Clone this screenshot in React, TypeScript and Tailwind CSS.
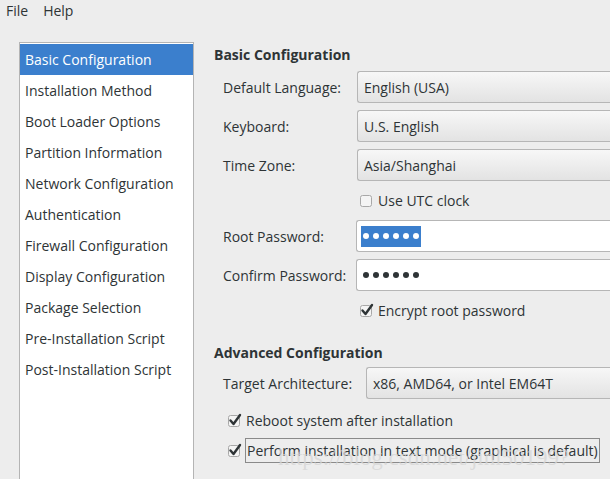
const font = { fontFamily: '"Open Sans", "DejaVu Sans", sans-serif' }

const pages = [
  "Basic Configuration",
  "Installation Method",
  "Boot Loader Options",
  "Partition Information",
  "Network Configuration",
  "Authentication",
  "Firewall Configuration",
  "Display Configuration",
  "Package Selection",
  "Pre-Installation Script",
  "Post-Installation Script",
]

function Check({ checked }: { checked: boolean }) {
  return (
    <svg width="16" height="16" viewBox="0 0 16 16" className="shrink-0">
      <rect x="1.5" y="3.5" width="11" height="11" rx="2" fill="#f4f4f4" stroke="#a8a8a8" />
      {checked && (
        <path d="M3.5 8.5 L6.5 12 L13 3" fill="none" stroke="#2e3436" strokeWidth="2.4" strokeLinecap="round" strokeLinejoin="round" />
      )}
    </svg>
  )
}

function Combo({ value }: { value: string }) {
  return (
    <div className="h-[32px] flex-1 flex items-center pl-[6px] rounded-l-[3px] border border-r-0 border-[#b6b6b6] bg-gradient-to-b from-[#f7f7f7] to-[#e3e3e3]">
      {value}
    </div>
  )
}

function Row({ label, children }: { label: string; children: React.ReactNode }) {
  return (
    <div className="flex items-center">
      <div className="w-[134px] shrink-0">{label}</div>
      {children}
    </div>
  )
}

function Dots() {
  return (
    <span className="flex gap-[4px]">
      {[0, 1, 2, 3, 4, 5].map(i => (
        <span key={i} className="w-[6px] h-[6px] rounded-full bg-current" />
      ))}
    </span>
  )
}

export default function App() {
  return (
    <div style={font} className="relative w-[610px] h-[479px] overflow-hidden bg-[#ededed] text-[14px] text-[#2e3436]">
      <div className="h-[22px] flex items-center gap-[15px] pl-[6px] -mt-[1px]">
        <span>File</span>
        <span>Help</span>
      </div>

      <div className="flex pl-[19px] pt-[21px]">
        <div className="w-[175px] h-[440px] shrink-0 border border-[#b4b4b4] bg-white pt-[1px]">
          {pages.map((p, i) => (
            <div
              key={p}
              className={`h-[31px] flex items-center pl-[5px] ${i === 0 ? "bg-[#3b7fcd] text-white" : ""}`}
            >
              {p}
            </div>
          ))}
        </div>

        <div className="flex-1 pl-[20px] -mt-[1px]">
          <div className="font-bold h-[26px] flex items-center">Basic Configuration</div>
          <div className="pl-[9px] flex flex-col">
            <div className="flex flex-col gap-[7px] mt-[4px]">
              <Row label="Default Language:"><Combo value="English (USA)" /></Row>
              <Row label="Keyboard:"><Combo value="U.S. English" /></Row>
              <Row label="Time Zone:"><Combo value="Asia/Shanghai" /></Row>
            </div>
            <div className="flex items-center gap-[3px] pl-[136px] h-[38px]">
              <Check checked={false} />
              <span>Use UTC clock</span>
            </div>
            <div className="flex flex-col gap-[7px] mt-[1px]">
              <Row label="Root Password:">
                <div className="h-[32px] flex-1 flex items-center pl-[4px] -ml-[1px] rounded-l-[3px] border border-r-0 border-[#b6b6b6] bg-white">
                  <span className="bg-[#3b7fcd] text-white px-[2px] h-[21px] flex items-center">
                    <Dots />
                  </span>
                </div>
              </Row>
              <Row label="Confirm Password:">
                <div className="h-[32px] flex-1 flex items-center pl-[6px] -ml-[1px] rounded-l-[3px] border border-r-0 border-[#b6b6b6] bg-white">
                  <Dots />
                </div>
              </Row>
            </div>
            <div className="flex items-center gap-[3px] pl-[136px] h-[38px]">
              <Check checked />
              <span>Encrypt root password</span>
            </div>
          </div>

          <div className="font-bold h-[26px] flex items-center mt-[10px]">Advanced Configuration</div>
          <div className="pl-[9px] flex flex-col mt-[2px]">
            <div className="flex items-center">
              <div className="w-[143px] shrink-0">Target Architecture:</div>
              <Combo value="x86, AMD64, or Intel EM64T" />
            </div>
            <div className="flex items-center gap-[3px] pl-[4px] h-[38px] mt-[2px]">
              <Check checked />
              <span>Reboot system after installation</span>
            </div>
            <div className="flex items-center gap-[2px] pl-[4px] h-[26px] -mt-[2px]">
              <Check checked />
              <span className="border border-[#8a8a8a] px-[1px] h-[25px] flex items-center">
                Perform installation in text mode (graphical is default)
              </span>
            </div>
          </div>
        </div>
      </div>

      <div
        className="absolute left-[278px] top-[441px] text-[23px] text-[#d6d6d6]/80 pointer-events-none"
        style={{ fontFamily: '"Liberation Serif", serif' }}
      >
        https://blog.csdn.net/jinl50199?
      </div>
    </div>
  )
}
